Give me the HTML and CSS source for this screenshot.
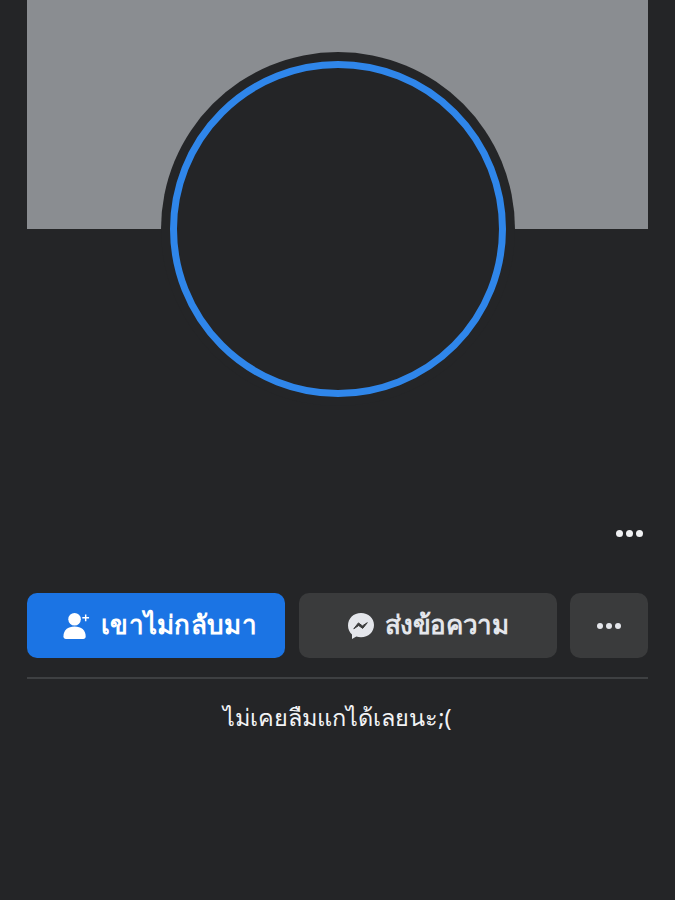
FILE: index.html
```html
<!DOCTYPE html>
<html lang="th">
<head>
<title>Profile</title>
<meta charset="UTF-8">
<meta name="viewport" content="width=device-width, initial-scale=1">
<link rel="stylesheet" href="styles.css">
</head>
<body>

<div class="header">
  <div class="cover"></div>
  <div class="avatar"><div class="avatar-ring"></div></div>
</div>

<div class="name-row">
  <div class="dots dots-big"><i></i><i></i><i></i></div>
</div>

<div class="actions">
  <div class="button primary">
    <svg class="icon" width="29" height="29" viewBox="0 0 30 30">
      <circle cx="13" cy="8.500" r="6.500" fill="#fff"/>
      <path d="M1.500 26.500c0-7 4.500-10.500 11.500-10.500s11.500 3.500 11.500 10.500c0 1.500-1 2.500-2.500 2.500H4c-1.500 0-2.500-1-2.500-2.500z" fill="#fff"/>
      <path d="M24.500 3.500v7M21 7h7" stroke="#fff" stroke-width="1.500" fill="none"/>
    </svg>
    <span class="label label-wide">เขาไม่กลับมา</span>
  </div>
  <div class="button secondary">
    <svg class="icon" width="28" height="28" viewBox="0 0 28 28">
      <path d="M14 1C6.500 1 1 6.400 1 13.500c0 3.700 1.500 6.900 4 9.100v4.400l4.300-2.400c1.500.5 3 .7 4.700.7 7.500 0 13-5.400 13-12.300S21.500 1 14 1z" fill="#e4e6eb"/>
      <path d="M6.800 16.800l4.600-5.900 4 3 4.900-3.200-4.600 5.700-4-2.900z" fill="#3a3b3c" stroke="#3a3b3c" stroke-width="1" stroke-linejoin="round"/>
    </svg>
    <span class="label label-tight">ส่งข้อความ</span>
  </div>
  <div class="button secondary more">
    <div class="dots"><i></i><i></i><i></i></div>
  </div>
</div>

<div class="bio">ไม่เคยลืมแกได้เลยนะ;(</div>

</body>
</html>
```

FILE: styles.css
```css
* {
  box-sizing: border-box;
}

body {
  margin: 0;
  height: 900px;
  overflow: hidden;
  padding: 0 27px;
  background-color: #242527;
  color: #fff;
  font-family: "Noto Sans", "DejaVu Sans", "Liberation Sans", sans-serif;
}

/* Cover and profile picture */
.header {
  position: relative;
}

.cover {
  height: 229px;
  background-color: #8a8d91;
}

.avatar {
  position: absolute;
  top: 52px;
  left: 134px;
  width: 354px;
  height: 354px;
  border-radius: 50%;
  background-color: #242527;
  padding: 9px;
}

.avatar-ring {
  height: 100%;
  border: 7px solid #2f86ea;
  border-radius: 50%;
}

/* Three dots */
.dots {
  display: flex;
  gap: 3px;
}

.dots i {
  width: 6px;
  height: 6px;
  border-radius: 50%;
  background-color: #e4e6eb;
}

.dots-big i {
  width: 7px;
  height: 7px;
  background-color: #f0f1f3;
}

.name-row {
  display: flex;
  justify-content: flex-end;
  padding: 301px 5px 0 0;
}

/* Buttons */
.actions {
  display: flex;
  justify-content: space-between;
  margin-top: 56px;
  padding-bottom: 19px;
  border-bottom: 2px solid #3e4042;
}

.button {
  flex: 0 0 258px;
  height: 65px;
  border-radius: 10px;
  display: flex;
  align-items: center;
  justify-content: center;
  gap: 10px;
  font-size: 26px;
  font-weight: 600;
}

.label {
  padding-bottom: 3px;
}

.label-wide {
  letter-spacing: 0.3px;
}

.label-tight {
  letter-spacing: -0.4px;
}

.primary {
  padding-left: 7px;
  background-color: #1b74e4;
  color: #fff;
}

.secondary {
  background-color: #3a3b3c;
  color: #e4e6eb;
}

.more {
  flex: 0 0 78px;
}

.bio {
  margin-top: 21px;
  text-align: center;
  font-size: 23.5px;
  line-height: 34px;
  color: #f2f3f5;
}
```
